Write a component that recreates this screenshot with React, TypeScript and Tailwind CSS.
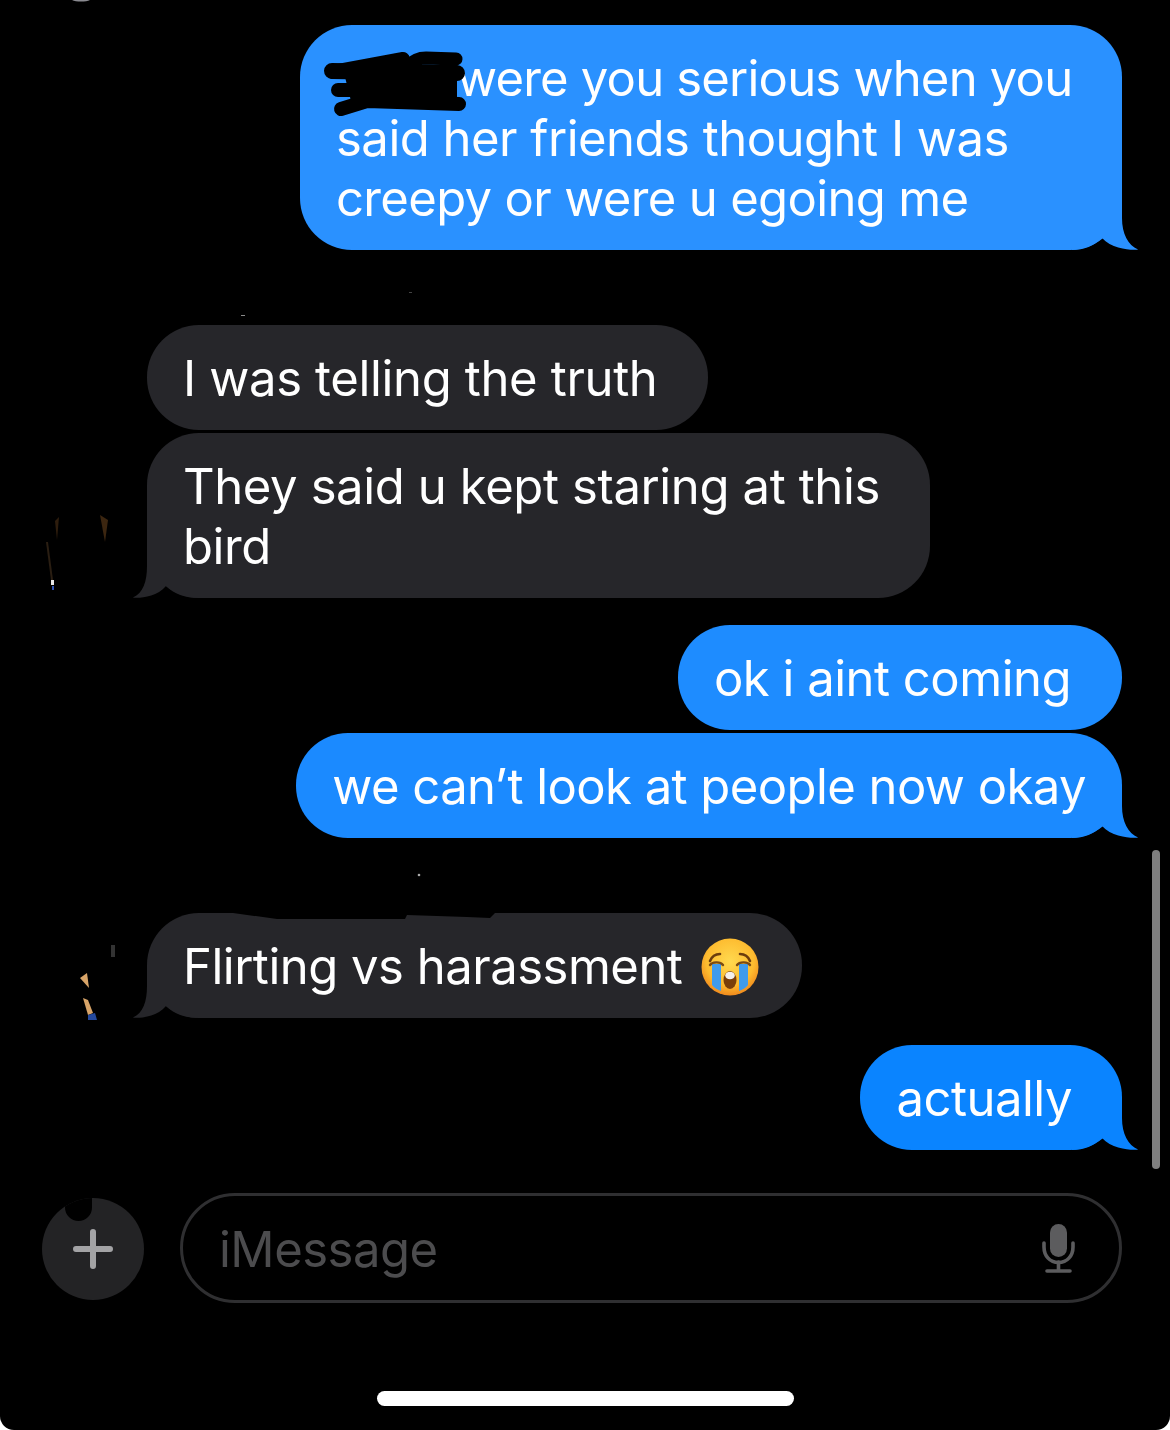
const font = "font-['Inter','Liberation_Sans',sans-serif]";

const OutTail = ({ color }: { color: string }) => (
  <svg className="absolute right-[-16px] bottom-0" width="66" height="52" viewBox="0 0 66 52">
    <path d="M0 0H50V20C50 36 56 47 66 51.5C62 52.5 41 52 30 40C22 48 12 52 0 52Z" fill={color} />
  </svg>
);

const InTail = () => (
  <svg className="absolute left-[-14px] bottom-0" width="66" height="52" viewBox="0 0 66 52">
    <path d="M66 0H14V20C14 36 10 47 0 51.5C4 52.5 23 52 33 40C41 48 52 52 66 52Z" fill="#26262a" />
  </svg>
);

const Out = ({ color, tail, children, className = '' }: { color?: string; tail?: boolean; children: React.ReactNode; className?: string }) => (
  <div className={`relative rounded-[52px] pl-[36px] pt-[24px] pb-[21px] text-white ${className}`}>
    <span className="relative z-10 whitespace-pre-line">{children}</span>
    {tail && color && <OutTail color={color} />}
  </div>
);

const In = ({ tail, children, className = '' }: { tail?: boolean; children: React.ReactNode; className?: string }) => (
  <div className={`relative rounded-[52px] bg-[#26262a] pl-[36px] pt-[24px] pb-[21px] text-white ${className}`}>
    <span className="relative z-10 whitespace-pre-line">{children}</span>
    {tail && <InTail />}
  </div>
);

const CryEmoji = () => (
  <svg className="-my-[10px] ml-[5px] inline-block -translate-y-[4px] align-middle" width="58" height="58" viewBox="0 0 58 58">
    <defs>
      <radialGradient id="face" cx="50%" cy="40%" r="60%">
        <stop offset="0%" stopColor="#ffd94f" />
        <stop offset="70%" stopColor="#fdbb2f" />
        <stop offset="100%" stopColor="#f08a1d" />
      </radialGradient>
    </defs>
    <circle cx="29" cy="29" r="28.5" fill="url(#face)" />
    <path d="M9 23C11 18 15 16 19 16M49 23C47 18 43 16 39 16" stroke="#6b3d0d" strokeWidth="2.6" fill="none" strokeLinecap="round" />
    <path d="M11 26H20V53C17 52 13 50 11 47Z" fill="#3f9bec" />
    <path d="M38 26H47V47C45 50 41 52 38 53Z" fill="#3f9bec" />
    <path d="M9 27C11 24 19 23 22 27M36 27C39 23 47 24 49 27" stroke="#7a4a12" strokeWidth="2.4" fill="none" strokeLinecap="round" />
    <ellipse cx="29" cy="42" rx="6.5" ry="9" fill="#7a3f0a" />
    <ellipse cx="29" cy="37.5" rx="4.8" ry="3.8" fill="#f4f0ea" />
  </svg>
);

// Black marker over the name in the first bubble
const Scribble = () => (
  <svg className="absolute left-[22px] top-[25px] z-20" width="150" height="100" viewBox="0 0 150 100" fill="none" stroke="#000" strokeLinecap="round" strokeLinejoin="round">
    <path d="M20 40H135V80H30Z" fill="#000" stroke="none" />
    <path d="M11 47L81 34" strokeWidth="14" />
    <path d="M88 39C92 36 96 33 104 33L134 34" strokeWidth="13" />
    <path d="M10 46L135 48" strokeWidth="16" />
    <path d="M16 65L128 65" strokeWidth="14" />
    <path d="M19 84L45 76L137 79" strokeWidth="14" />
  </svg>
);

// What is left of the blacked-out avatars and time stamps
const Leftovers = () => (
  <svg className="absolute left-0 top-0 z-20" width="1170" height="1430" viewBox="0 0 1170 1430">
    <path d="M72 0H90C86 2 76 2 72 0Z" fill="#8a8a90" />
    <rect x="241" y="315" width="4" height="1" fill="#8a8a8a" />
    <rect x="409" y="292" width="3" height="1" fill="#444" />
    <circle cx="419" cy="875" r="1.3" fill="#aaa" />
    <path d="M233 913L277 919H405L407 915L467 917L490 918L495 913Z" fill="#000" />
    <path d="M55 521L59 517L57 540Z" fill="#2e1d0d" />
    <path d="M100 515L108 520L105 542Z" fill="#3c2610" />
    <path d="M46 542L48 542L53 580L51 580Z" fill="#2a1e12" />
    <rect x="51" y="580" width="3" height="5" fill="#e8e8e8" />
    <rect x="52" y="586" width="2" height="4" fill="#2c4fb0" />
    <path d="M80 978L87 973L89 988Z" fill="#d8a468" />
    <path d="M83 998L88 1000L93 1013L88 1015Z" fill="#d8a468" />
    <path d="M88 1015L95 1013L97 1020H88Z" fill="#24489c" />
    <rect x="111" y="945" width="4" height="12" fill="#333" />
  </svg>
);

export default function App() {
  return (
    <div className="relative h-[1430px] w-[1170px] overflow-hidden bg-white">
      <div className={`${font} relative flex h-full flex-col rounded-b-[14px] bg-black text-[49px] leading-[60px] tracking-[-0.5px]`}>
        <div className="flex flex-col items-end pr-[48px] pt-[25px]">
          <Out color="#2a91ff" tail className="w-[822px] bg-[#2a91ff]">
            <span className="inline-block w-[121px]" />
            <span className="tracking-[-0.8px]">were you serious when you</span>
            {'\nsaid her friends thought I was\n'}
            <span className="tracking-[-0.65px]">creepy or were u egoing me</span>
          </Out>
        </div>

        <div className="flex flex-col items-start gap-[3px] pl-[147px] pt-[75px]">
          <In className="pr-[51px] tracking-[-0.35px]">I was telling the truth</In>
          <In tail className="w-[783px] tracking-[-0.38px]">{'They said u kept staring at this\nbird'}</In>
        </div>

        <div className="flex flex-col items-end gap-[3px] pr-[48px] pt-[27px]">
          <Out className="bg-[#1e8cff] pr-[51px]">ok i aint coming</Out>
          <Out color="#1b8aff" tail className="bg-[#1b8aff] pr-[36px] tracking-[-0.56px]">we can’t look at people now okay</Out>
        </div>

        <div className="flex flex-col items-start pl-[147px] pt-[75px]">
          <In tail className="pr-[43px]">
            Flirting vs harassment <CryEmoji />
          </In>
        </div>

        <div className="flex flex-col items-end pr-[48px] pt-[27px]">
          <Out color="#0a84ff" tail className="bg-[#0a84ff] pr-[50px]">actually</Out>
        </div>

        <div className="flex items-center gap-[36px] pl-[42px] pr-[48px] pt-[43px]">
          <div className="relative mt-[2px] flex h-[102px] w-[102px] shrink-0 items-center justify-center overflow-hidden rounded-full bg-[#232325]">
            <div className="absolute left-[23px] top-[-14px] h-[37px] w-[27px] rounded-b-full bg-black" />
            <svg width="40" height="40" viewBox="0 0 40 40">
              <path d="M20 3V37M3 20H37" stroke="#a3a3a5" strokeWidth="6" strokeLinecap="round" />
            </svg>
          </div>
          <div className="flex h-[110px] flex-1 items-center justify-between rounded-[55px] border-[3px] border-[#2f2f31] pl-[36px] pr-[43px]">
            <span className="pt-[3px] text-[#4c4c4e]">iMessage</span>
            <svg className="mt-[2px]" width="34" height="50" viewBox="0 0 34 50">
              <rect x="8" y="0" width="17" height="33" rx="8.5" fill="#5c5c5e" />
              <path d="M2 19V23C2 32 8 38.5 16.5 38.5C25 38.5 31 32 31 23V19" stroke="#5c5c5e" strokeWidth="3.6" strokeLinecap="round" fill="none" />
              <path d="M16.5 38V46M5 47H28" stroke="#5c5c5e" strokeWidth="3.6" strokeLinecap="round" />
            </svg>
          </div>
        </div>

        <div className="absolute bottom-[24px] left-[377px] h-[15px] w-[417px] rounded-full bg-white" />
        <div className="absolute left-[1152px] top-[850px] h-[319px] w-[8px] rounded-full bg-[#7f7f7f]" />
      </div>
      <div className="absolute left-[300px] top-0 z-20 h-0 w-0"><Scribble /></div>
      <Leftovers />
    </div>
  );
}
